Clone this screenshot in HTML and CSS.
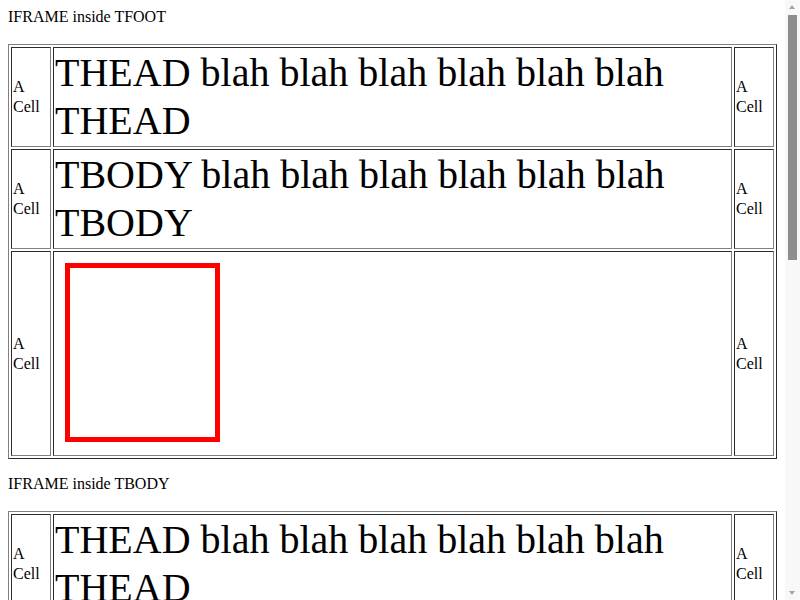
FILE: index.html
```html
<!DOCTYPE html>
<html>
<head>
<meta charset="utf-8">
<link rel="stylesheet" href="styles.css">
</head>
<body>
<div class="title">IFRAME inside TFOOT</div>
<table class="grid">
  <thead>
    <tr><td class="side">A Cell</td><td class="big">THEAD blah blah blah blah blah blah THEAD</td><td class="side">A Cell</td></tr>
  </thead>
  <tbody>
    <tr><td class="side">A Cell</td><td class="big">TBODY blah blah blah blah blah blah TBODY</td><td class="side">A Cell</td></tr>
  </tbody>
  <tfoot>
    <tr><td class="side">A Cell</td><td class="frame-cell"><div class="frame"></div></td><td class="side">A Cell</td></tr>
  </tfoot>
</table>

<div class="title">IFRAME inside TBODY</div>
<table class="grid">
  <thead>
    <tr><td class="side">A Cell</td><td class="big">THEAD blah blah blah blah blah blah THEAD</td><td class="side">A Cell</td></tr>
  </thead>
  <tbody>
    <tr><td class="side">A Cell</td><td class="frame-cell"><div class="frame"></div></td><td class="side">A Cell</td></tr>
  </tbody>
  <tfoot>
    <tr><td class="side">A Cell</td><td class="big">TFOOT blah blah blah blah blah blah TFOOT</td><td class="side">A Cell</td></tr>
  </tfoot>
</table>

<div class="title">IFRAME inside THEAD</div>
<table class="grid">
  <thead>
    <tr><td class="side">A Cell</td><td class="frame-cell"><div class="frame"></div></td><td class="side">A Cell</td></tr>
  </thead>
  <tbody>
    <tr><td class="side">A Cell</td><td class="big">TBODY blah blah blah blah blah blah TBODY</td><td class="side">A Cell</td></tr>
  </tbody>
  <tfoot>
    <tr><td class="side">A Cell</td><td class="big">TFOOT blah blah blah blah blah blah TFOOT</td><td class="side">A Cell</td></tr>
  </tfoot>
</table>

<div class="scrollbar">
  <div class="arrow-up"></div>
  <div class="thumb"></div>
  <div class="arrow-down"></div>
</div>
</body>
</html>
```
FILE: styles.css
```css
html {
  background: #fff;
}
body {
  margin: 8px 23px 8px 8px;
  font-family: "Liberation Serif", "Times New Roman", serif;
  font-size: 16px;
  color: #000;
}
.title {
  line-height: 18px;
  margin-bottom: 18px;
}
.grid {
  width: 100%;
  border: 1px outset #808080;
  border-spacing: 2px;
  margin-bottom: 16px;
}
.grid td {
  border: 1px inset #808080;
  padding: 1px;
  vertical-align: middle;
}
.side {
  width: 36px;
  line-height: 20px;
}
.big {
  font-size: 40px;
  line-height: 48px;
}
.frame-cell {
  line-height: 18px;
}
.frame {
  box-sizing: border-box;
  width: 155px;
  height: 179px;
  margin: 10px 10px 12px;
  border: 5px solid #f00;
}
.scrollbar {
  position: fixed;
  top: 0;
  right: 0;
  width: 15px;
  height: 100%;
  background: #f8f8f8;
}
.arrow-up {
  position: absolute;
  top: 5px;
  left: 4px;
  width: 0;
  height: 0;
  border-left: 3.5px solid transparent;
  border-right: 3.5px solid transparent;
  border-bottom: 4px solid #a3a3a3;
}
.arrow-down {
  position: absolute;
  bottom: 5px;
  left: 4px;
  width: 0;
  height: 0;
  border-left: 3.5px solid transparent;
  border-right: 3.5px solid transparent;
  border-top: 4px solid #a3a3a3;
}
.thumb {
  position: absolute;
  top: 15px;
  left: 3px;
  width: 9px;
  height: 245px;
  background: #8e8e8e;
}
```
